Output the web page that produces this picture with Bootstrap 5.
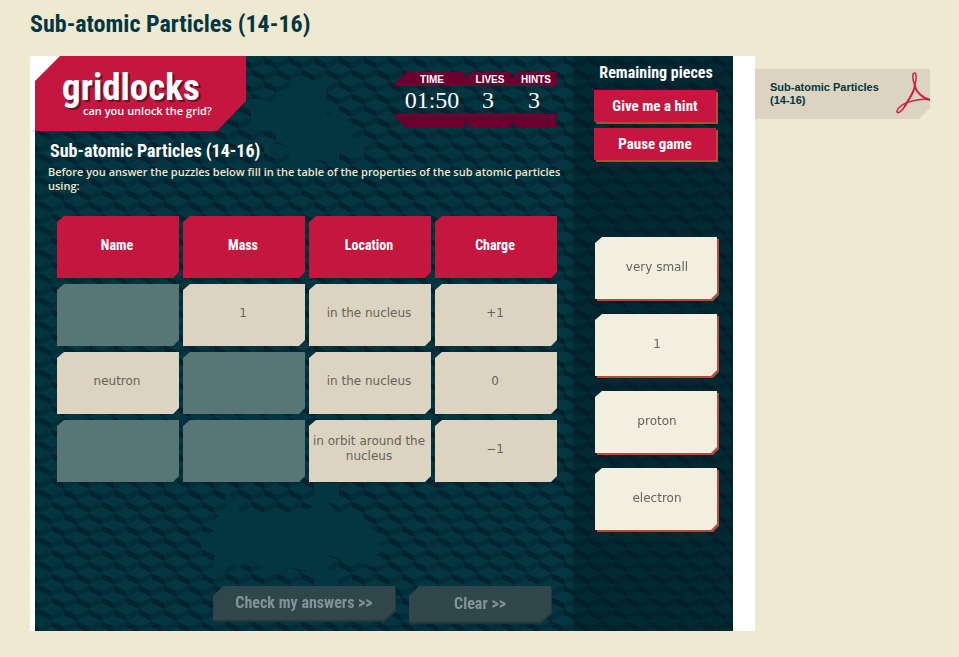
<!DOCTYPE html>
<html lang="en">
<head>
<meta charset="utf-8">
<meta name="viewport" content="width=device-width, initial-scale=1">
<title>Sub-atomic Particles (14-16)</title>
<link href="https://cdn.jsdelivr.net/npm/bootstrap@5.3.0/dist/css/bootstrap.min.css" rel="stylesheet">
<style>
:root{--cream:#f0e9d2;--navy:#033640;--red:#c4163f;--plum:#6b0030;--sand:#dcd4c1;--display:"Liberation Sans Narrow","Roboto Condensed",Roboto,sans-serif}
body{background:var(--cream);color:var(--navy);font-family:"DejaVu Sans",sans-serif;font-size:12px}
.page{padding:8px 29px 26px 30px}
.display-face{font-family:var(--display);font-weight:700}
.page-title{font-size:24px;line-height:32px;margin:0 0 16px}
.frame{background:#fff;padding:0 22px 0 5px;min-width:0}
.game{background:var(--navy);min-height:575px}
.backdrop{position:absolute;inset:0;width:100%;height:100%}
.brand{width:211px;height:75px;background:var(--red);color:#fff;padding:14px 0 0 27px;clip-path:polygon(0 0,100% 0,100% 45px,182px 100%,0 100%)}
.corner{background:#fff;clip-path:polygon(0 0,25px 0,0 25px);position:absolute;top:0;left:0;width:25px;height:25px}
.brand-name{font-size:37px;line-height:36px;text-shadow:2px 2px 0 #6a1024}
.brand-tag{font-family:"Open Sans",sans-serif;font-weight:600;font-size:11px;line-height:14px;margin-top:-2px;padding-left:21px}
.stats{margin:16px 16px 0 0;color:#fff;text-align:center}
.stat-label,.stat-foot{background:var(--plum);height:14px;line-height:15px;font-family:"Liberation Sans",sans-serif;font-weight:700;font-size:10px}
.stat-label{clip-path:polygon(7px 0,100% 0,100% 100%,0 100%,0 7px);padding-left:4px}
.stat-foot{clip-path:polygon(0 0,100% 0,100% 100%,7px 100%,0 7px)}
.stat{width:46px}
.stat-time{width:72px}
.stat-time .stat-label{clip-path:polygon(13px 0,100% 0,100% 100%,0 100%);padding-left:6px}
.stat-time .stat-foot{clip-path:polygon(0 0,100% 0,100% 100%,13px 100%)}
.stat-value{font:500 24px/28px "Liberation Serif",serif}
.stat-time .stat-value{padding-left:6px}
.game-title{font-size:18px;line-height:24px;color:#fff;margin:8px 0 0 15px}
.intro{font-family:"Open Sans",sans-serif;font-weight:600;font-size:11px;line-height:14px;color:var(--cream);margin:2px 10px 0 13px}
.grid-table{border-collapse:separate;border-spacing:4px 6px;margin:17px 12px 0 18px;table-layout:fixed;width:508px;max-width:calc(100% - 30px)}
.grid-table th,.grid-table td{height:62px;text-align:center;vertical-align:middle;padding:0 4px 4px 2px;line-height:15px;clip-path:polygon(7px 0,100% 0,100% calc(100% - 6px),calc(100% - 6px) 100%,0 100%,0 6px)}
.grid-table th{background:var(--red);color:#fff;font-family:var(--display);font-size:14px}
.grid-table td{background:var(--sand);color:#66635c}
.grid-table td:empty{background:#587675}
.actions{padding:0 22px 9px 0;gap:14px}
.act-wrap{filter:drop-shadow(1px 2px 0 #26373b)}
.act{height:34px;width:182px;border:0;background:#2f474b;color:#82939a;font-family:var(--display);font-weight:700;font-size:16px;clip-path:polygon(10px 0,100% 0,100% calc(100% - 10px),calc(100% - 11px) 100%,0 100%,0 10px)}
.act-clear{width:142px;height:36px}
.remaining{width:160px;background:rgba(0,26,34,.45);padding:6px 15px 16px 21px}
.remaining-title{font-size:16px;line-height:22px;color:#fff;margin:0 0 6px;text-align:center}
.tool{height:32px;border:0;background:var(--red);color:#fff;font-family:var(--display);font-weight:700;font-size:15px;box-shadow:2px 2px 0 #b24c38;margin:0 2px 6px 0}
.pieces{margin:71px 0 0;padding:0;list-style:none;gap:15px}
.pieces li{filter:drop-shadow(2px 2px 0 #b24c38);height:62px;margin-right:1px;margin-left:1px}
.piece{height:62px;border:0;padding:0 0 2px 2px;background:#f2efe0;color:#66635c;font-size:12px;clip-path:polygon(7px 0,100% 0,100% calc(100% - 6px),calc(100% - 6px) 100%,0 100%,0 6px)}
.download{width:175px;margin-top:13px;height:50px;background:var(--sand);color:var(--navy);font:700 11px/13px "Liberation Sans",sans-serif;padding-left:15px;clip-path:polygon(0 0,100% 0,100% 39px,164px 100%,0 100%)}
.download:hover{color:var(--red)}
</style>
</head>
<body>
<div class="page">
  <h1 class="page-title display-face">Sub-atomic Particles (14-16)</h1>
  <div class="d-flex align-items-start">
    <main class="frame flex-grow-1">
      <div class="game position-relative d-flex">
        <svg class="backdrop" aria-hidden="true">
          <defs>
            <pattern id="cubes" x="4" y="1" width="25" height="24" patternUnits="userSpaceOnUse">
              <path fill="#00232f" d="M0 0 12.500 6V12L0 6Z M12.500 12 25 18V24L12.500 18Z"/>
              <path fill="#022d39" d="M12.500 6 25 0V6L12.500 12Z M0 18 12.500 12V18L0 24Z"/>
            </pattern>
          </defs>
          <rect width="100%" height="100%" fill="url(#cubes)"/>
          <path fill="#033640" d="M254 25 266 19V31L279 25H291V43L304 49V61L291 55 279 61 304 73V61L316 67V79L329 85V103L304 97V109L279 103V115H254V97L241 103 229 97V85L254 91V73L216 61V43H229L241 49V37L254 43ZM216 55 254 67V79L216 73ZM241 43H291V61H241ZM241 61H304V85H241Z"/>
          <path fill="#033640" d="M191 439 204 445V457L216 451 229 457 254 457 279 451V427H304V439L291 445 304 457H329V469L341 475V487L354 493 341 499V511L316 505 291 499V511L304 517V529H279V517L254 511 241 517 216 505 204 511 191 505V517L179 511V499L166 493V481L179 475V463L191 457Z"/>
        </svg>
        <div class="position-relative flex-grow-1 d-flex flex-column">
          <header class="d-flex justify-content-between align-items-start">
            <div class="brand">
              <div class="brand-name display-face">gridlocks</div>
              <div class="brand-tag">can you unlock the grid?</div>
            </div>
            <span class="corner"></span>
            <div class="stats d-flex">
              <div class="stat stat-time"><div class="stat-label">TIME</div><div class="stat-value">01:50</div><div class="stat-foot"></div></div>
              <div class="stat"><div class="stat-label">LIVES</div><div class="stat-value">3</div><div class="stat-foot"></div></div>
              <div class="stat"><div class="stat-label">HINTS</div><div class="stat-value">3</div><div class="stat-foot"></div></div>
            </div>
          </header>
          <h2 class="game-title display-face">Sub-atomic Particles (14-16)</h2>
          <p class="intro">Before you answer the puzzles below fill in the table of the properties of the sub atomic particles using:</p>
          <table class="grid-table">
            <thead><tr><th scope="col">Name</th><th scope="col">Mass</th><th scope="col">Location</th><th scope="col">Charge</th></tr></thead>
            <tbody>
              <tr><td></td><td>1</td><td>in the nucleus</td><td>+1</td></tr>
              <tr><td>neutron</td><td></td><td>in the nucleus</td><td>0</td></tr>
              <tr><td></td><td></td><td>in orbit around the nucleus</td><td>−1</td></tr>
            </tbody>
          </table>
          <div class="actions d-flex justify-content-end mt-auto">
            <div class="act-wrap"><button type="button" class="act">Check my answers &gt;&gt;</button></div>
            <div class="act-wrap"><button type="button" class="act act-clear">Clear &gt;&gt;</button></div>
          </div>
        </div>
        <aside class="remaining position-relative flex-shrink-0 d-flex flex-column">
          <h2 class="remaining-title display-face">Remaining pieces</h2>
          <button type="button" class="tool">Give me a hint</button>
          <button type="button" class="tool">Pause game</button>
          <ul class="pieces d-flex flex-column">
            <li><button type="button" class="piece w-100">very small</button></li>
            <li><button type="button" class="piece w-100">1</button></li>
            <li><button type="button" class="piece w-100">proton</button></li>
            <li><button type="button" class="piece w-100">electron</button></li>
          </ul>
        </aside>
      </div>
    </main>
    <a href="#" class="download flex-shrink-0 d-flex align-items-center justify-content-between text-decoration-none">
      <span>Sub-atomic Particles<br>(14-16)</span>
      <svg width="36" height="50" viewBox="4 4 36 50" fill="none" stroke="#cc2348" stroke-linecap="round" aria-hidden="true">
        <path stroke-width="1.500" d="M24.500 19C22 14 22.500 8 24.500 8S27 14 24.500 20C25 27 19 33 15 41C12 46 8 49 7 47S11 40 16 38C24 35 33 33 42 35"/>
        <path stroke-width="2" d="M24.500 18C25 27 33 34 42 35"/>
        <path stroke-width="2" d="M24 24C22 31 18 35 15 41"/>
      </svg>
    </a>
  </div>
</div>
<script src="https://cdn.jsdelivr.net/npm/bootstrap@5.3.0/dist/js/bootstrap.bundle.min.js"></script>
</body>
</html>
